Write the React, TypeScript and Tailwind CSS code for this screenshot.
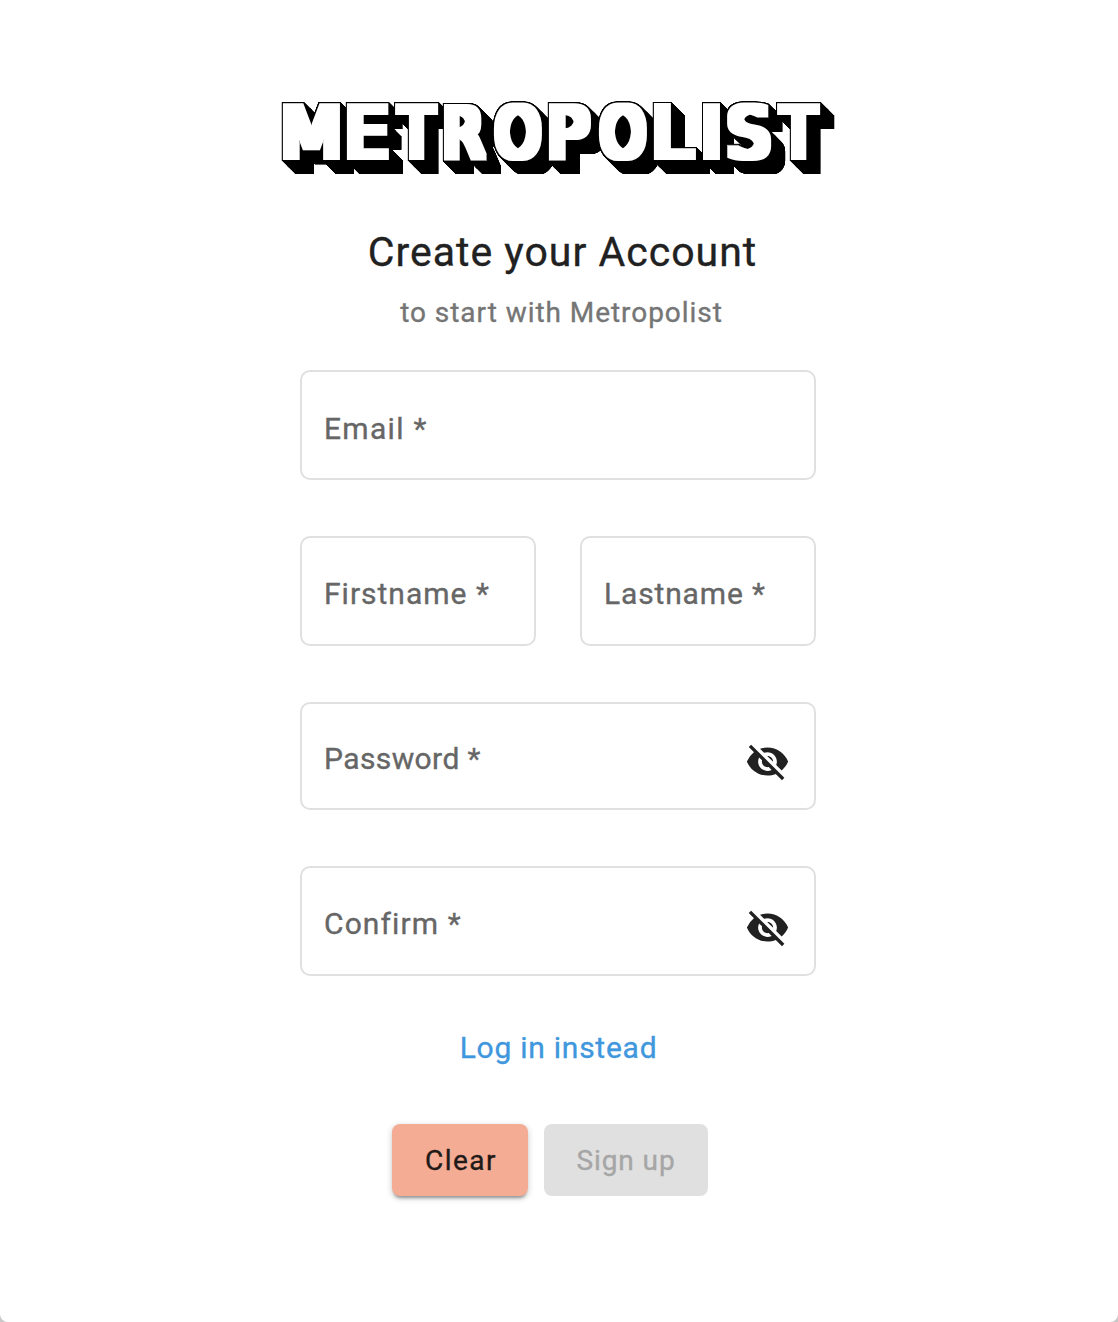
import { MdVisibilityOff } from 'react-icons/md';

// Each letter of the wordmark: left edge, width, and font metrics
// (advance, left bearing, ink width) in font units.
const LETTERS: [string, number, number, number, number, number][] = [
  ['M', 0, 59, 1767, 201, 1366],
  ['E', 64, 44, 1294, 201, 963],
  ['T', 112, 45, 1251, -6, 1263],
  ['R', 161, 45, 1423, 201, 1163],
  ['O', 211, 50, 1612, 115, 1382],
  ['P', 266, 44, 1235, 201, 962],
  ['O', 316, 50, 1612, 115, 1382],
  ['L', 371, 44, 1141, 201, 929],
  ['I', 420, 19, 604, 201, 202],
  ['S', 444, 46, 1300, 135, 1050],
  ['T', 494, 45, 1251, -6, 1263],
];

function Logo() {
  return (
    <svg className="block h-[113px] w-[552px] overflow-visible" viewBox="0 -20 552 113">
      <defs>
        <filter id="extrude" filterUnits="userSpaceOnUse" x="-2" y="-2" width="556" height="74" colorInterpolationFilters="sRGB">
          <feMorphology in="SourceGraphic" operator="dilate" radius="5 3" result="face" />
          <feMorphology in="face" operator="dilate" radius="1" result="fat" />
          <feColorMatrix in="fat" values="0 0 0 0 0  0 0 0 0 0  0 0 0 0 0  0 0 0 2 0" result="s0" />
          <feOffset in="s0" dx="1" dy="1" result="o1" />
          <feMerge result="s1"><feMergeNode in="s0" /><feMergeNode in="o1" /></feMerge>
          <feOffset in="s1" dx="2" dy="2" result="o2" />
          <feMerge result="s2"><feMergeNode in="s1" /><feMergeNode in="o2" /></feMerge>
          <feOffset in="s2" dx="4" dy="4" result="o3" />
          <feMerge result="s3"><feMergeNode in="s2" /><feMergeNode in="o3" /></feMerge>
          <feOffset in="s3" dx="6" dy="6" result="o4" />
          <feMerge><feMergeNode in="s3" /><feMergeNode in="o4" /><feMergeNode in="face" /></feMerge>
        </filter>
      </defs>
      <text y="55" fontSize="70" fill="#fff" filter="url(#extrude)" fontFamily='"DejaVu Sans", sans-serif'>
        {LETTERS.map(([ch, left, width, advance, bearing, ink], i) => {
          const k = (width - 12) / ink;
          return (
            <tspan key={i} x={left + 6 - bearing * k} textLength={advance * k} lengthAdjust="spacingAndGlyphs">{ch}</tspan>
          );
        })}
      </text>
    </svg>
  );
}

type FieldProps = { label: string; text?: string; box?: string; icon?: string };

function Field({ label, text = 'tracking-[1.1px]', box = 'h-[110px] pt-2', icon }: FieldProps) {
  return (
    <label className={`flex w-full items-center justify-between rounded-[10px] border-2 border-[#e0e0e0] pl-[22px] pr-[24px] ${box}`}>
      <span className={`text-[30px] leading-9 whitespace-nowrap text-[#666] ${text}`}>{label}</span>
      {icon && <MdVisibilityOff className={`size-[45px] shrink-0 text-[#212121] ${icon}`} />}
    </label>
  );
}

export default function App() {
  return (
    <div className="h-[1322px] w-[1118px] bg-[#c8c8c8] font-['Roboto',sans-serif] [-webkit-text-stroke:0.35px_currentColor]">
      <main className="flex h-full flex-col items-center rounded-b-[8px] bg-white pt-[82px] pr-[2px]">
        <div className="[-webkit-text-stroke:0]"><Logo /></div>
        <h1 className="mt-[33px] pl-[9px] text-[41px] leading-[48px] tracking-[1px] whitespace-nowrap text-[#212121]">Create your Account</h1>
        <p className="mt-[20px] pl-[7px] text-[28px] leading-[34px] tracking-[0.95px] whitespace-nowrap text-[#757575]">to start with Metropolist</p>
        <form className="mt-[40px] flex w-[516px] flex-col">
          <Field label="Email *" text="tracking-[1.3px]" />
          <div className="mt-[56px] flex gap-11">
            <Field label="Firstname *" text="tracking-[1px]" box="h-[110px] pt-1.5" />
            <Field label="Lastname *" text="tracking-[0.85px]" box="h-[110px] pt-1.5" />
          </div>
          <div className="mt-[56px]"><Field label="Password *" text="tracking-[0.4px]" box="h-[108px] pt-1.5" icon="mt-1" /></div>
          <div className="mt-[56px]"><Field label="Confirm *" box="h-[110px] pt-1.5" icon="mt-1.5" /></div>
          <a className="mt-[54px] self-center pl-px text-[30px] leading-9 tracking-[0.75px] whitespace-nowrap text-[#3f97dd]">Log in instead</a>
          <div className="mt-[58px] ml-[92px] flex gap-4">
            <button type="button" className="h-[72px] w-[136px] rounded-[8px] bg-[#f4ad94] pt-0.5 pl-0.5 text-[28px] tracking-[1.5px] text-[#1f1a18] shadow-[0_4px_3px_-2px_rgba(0,0,0,0.3),0_2px_6px_rgba(0,0,0,0.22)]">Clear</button>
            <button type="button" disabled className="h-[72px] w-[164px] rounded-[8px] bg-[#e0e0e0] pt-0.5 text-[28px] tracking-[0.9px] text-[#a6a6a6]">Sign up</button>
          </div>
        </form>
      </main>
    </div>
  );
}
